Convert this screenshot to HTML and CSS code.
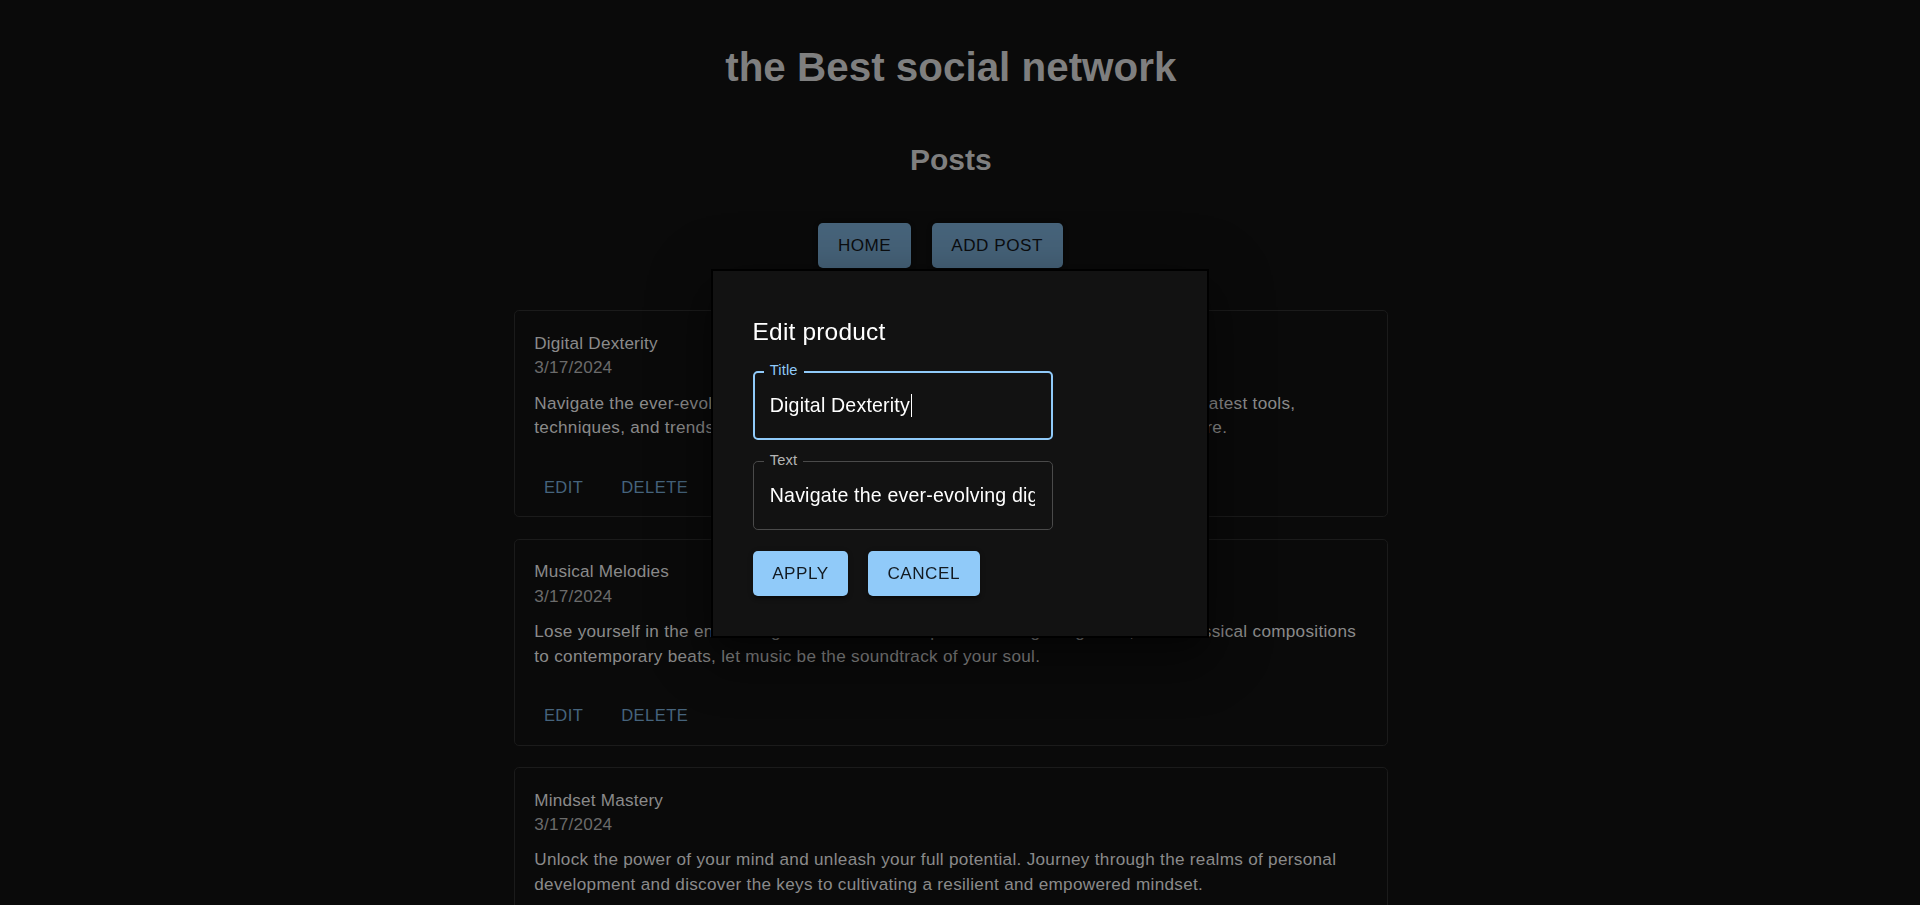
FILE: index.html
```html
<!DOCTYPE html>
<html lang="en">
<head>
<meta charset="utf-8">
<title>the Best social network</title>
<link rel="stylesheet" href="styles.css">
</head>
<body>
<div class="page">
  <h1 class="app-title">the Best social network</h1>
  <h2 class="section-title">Posts</h2>
  <nav class="nav">
    <button class="btn btn-contained btn-dim">Home</button>
    <button class="btn btn-contained btn-dim">Add post</button>
  </nav>
  <main class="posts">
    <article class="card">
      <div class="card-content">
        <div class="post-title">Digital Dexterity</div>
        <div class="post-date">3/17/2024</div>
        <p class="post-text">Navigate the ever-evolving digital landscape with confidence as you explore the very latest tools, techniques, and trends driving the world of technology and innovation for a bright future.</p>
      </div>
      <div class="card-actions">
        <button class="text-btn">Edit</button>
        <button class="text-btn">Delete</button>
      </div>
    </article>
    <article class="card">
      <div class="card-content">
        <div class="post-title">Musical Melodies</div>
        <div class="post-date">3/17/2024</div>
        <p class="post-text">Lose yourself in the enchanting world of music. Explore the range of genres, from classical compositions to contemporary beats, let music be the soundtrack of your soul.</p>
      </div>
      <div class="card-actions">
        <button class="text-btn">Edit</button>
        <button class="text-btn">Delete</button>
      </div>
    </article>
    <article class="card">
      <div class="card-content">
        <div class="post-title">Mindset Mastery</div>
        <div class="post-date">3/17/2024</div>
        <p class="post-text">Unlock the power of your mind and unleash your full potential. Journey through the realms of personal development and discover the keys to cultivating a resilient and empowered mindset.</p>
      </div>
      <div class="card-actions">
        <button class="text-btn">Edit</button>
        <button class="text-btn">Delete</button>
      </div>
    </article>
  </main>
</div>

<div class="overlay">
  <div class="dialog" role="dialog">
    <h2 class="dialog-title">Edit product</h2>
    <div class="field field-focused">
      <div class="field-outline"></div>
      <span class="field-label">Title</span>
      <div class="field-input"><div class="field-value">Digital Dexterity<span class="caret"></span></div></div>
    </div>
    <div class="field field-second">
      <div class="field-outline"></div>
      <span class="field-label">Text</span>
      <div class="field-input"><div class="field-value">Navigate the ever-evolving digital landscape with confidence</div></div>
    </div>
    <div class="dialog-actions">
      <button class="btn btn-contained">Apply</button>
      <button class="btn btn-contained">Cancel</button>
    </div>
  </div>
</div>
</body>
</html>
```
FILE: styles.css
```css
html {
  zoom: 1.2245;
}

body {
  margin: 0;
  padding-right: 15px;
  background: #0a0a0a;
  font-family: "Liberation Sans", Arial, Helvetica, sans-serif;
  overflow: hidden;
}

.page {
  display: flex;
  flex-direction: column;
  align-items: center;
}

.app-title {
  margin: 0;
  padding-top: 36px;
  font: bold 33px/38px "Liberation Sans", Arial, sans-serif;
  color: #7f7f7f;
  text-align: center;
}

.section-title {
  margin: 42px 0 0;
  font: bold 24.5px/29px "Liberation Sans", Arial, sans-serif;
  color: #7f7f7f;
  text-align: center;
}

.nav {
  display: flex;
  justify-content: center;
  margin-top: 37px;
}

.nav .btn {
  margin-right: 17px;
}

.btn {
  font-family: "Liberation Sans", Arial, sans-serif;
  font-weight: 400;
  font-size: 14px;
  line-height: 24.5px;
  letter-spacing: 0.03em;
  text-transform: uppercase;
  padding: 6px 16px;
  min-width: 64px;
  border: 0;
  border-radius: 4px;
  cursor: pointer;
}

.btn-contained {
  background: #90caf9;
  color: rgba(0, 0, 0, 0.87);
  box-shadow: 0 3px 1px -2px rgba(0, 0, 0, 0.2), 0 2px 2px 0 rgba(0, 0, 0, 0.14), 0 1px 5px 0 rgba(0, 0, 0, 0.12);
}

.btn-dim {
  background: #47647b;
  color: #0b0d0f;
}

.posts {
  width: 714px;
  margin-top: 35px;
  display: flex;
  flex-direction: column;
  gap: 17.5px;
}

.card {
  border: 1px solid #1b1b1b;
  border-radius: 4px;
  background: #0a0a0a;
}

.card-content {
  padding: 16px;
}

.post-title,
.post-date,
.post-text {
  font-size: 14px;
  line-height: 20px;
  letter-spacing: 0.0125em;
}

.post-title {
  color: #8a8a8a;
}

.post-date {
  color: #6b6b6b;
  margin-bottom: 8.75px;
}

.post-text {
  margin: 0;
  color: #8a8a8a;
  letter-spacing: 0.25px;
}

.card-actions {
  display: flex;
  gap: 10px;
  padding: 8px;
}

.text-btn {
  min-width: 64px;
  padding: 4px 5px;
  border: 0;
  background: none;
  font-family: "Liberation Sans", Arial, sans-serif;
  font-weight: 400;
  font-size: 13.5px;
  line-height: 22.75px;
  letter-spacing: 0.02857em;
  text-transform: uppercase;
  color: #46647d;
}

.overlay {
  position: fixed;
  inset: 0;
  display: flex;
  align-items: center;
  justify-content: center;
}

.dialog {
  width: 406px;
  box-sizing: border-box;
  margin-top: 2px;
  background: #121212;
  border: 2px solid #000;
  padding: 33px 32px;
  box-shadow: 0 11px 15px -7px rgba(0, 0, 0, 0.3), 0 24px 38px 3px rgba(0, 0, 0, 0.24), 0 9px 46px 8px rgba(0, 0, 0, 0.2);
}

.dialog-title {
  margin: 0;
  font: 400 20px/32px "Liberation Sans", Arial, sans-serif;
  letter-spacing: 0.0075em;
  color: #fff;
}

.field {
  position: relative;
  width: 245px;
  height: 56px;
  margin-top: 16.5px;
}

.field-second {
  margin-top: 17.5px;
}

.field-outline {
  position: absolute;
  inset: 0;
  border: 1px solid #4a4a4a;
  border-radius: 4px;
}

.field-focused .field-outline {
  border: 2px solid #90caf9;
}

.field-label {
  position: absolute;
  top: -8px;
  left: 9px;
  padding: 0 5px;
  background: #121212;
  font-size: 12px;
  line-height: 16px;
  letter-spacing: 0.00938em;
  color: rgba(255, 255, 255, 0.7);
}

.field-focused .field-label {
  color: #90caf9;
}

.field-input {
  position: relative;
  padding: 16.5px 14px;
}

.field-value {
  font-size: 16px;
  line-height: 23px;
  letter-spacing: 0.00938em;
  color: #fff;
  white-space: nowrap;
  overflow: hidden;
}

.caret {
  display: inline-block;
  width: 1px;
  height: 19px;
  margin-left: 1px;
  background: #fff;
  vertical-align: -4px;
}

.dialog-actions {
  display: flex;
  gap: 16px;
  margin-top: 17.5px;
}
```
